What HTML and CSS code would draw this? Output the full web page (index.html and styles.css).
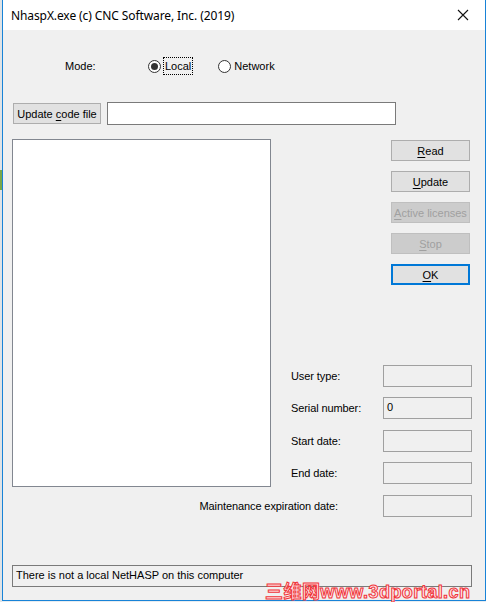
FILE: index.html
```html
<!DOCTYPE html>
<html lang="en">

<head>
    <meta charset="UTF-8">
    <meta name="viewport" content="width=device-width, initial-scale=1.0">
    <title>NhaspX</title>
    <link rel="stylesheet" href="styles.css">
</head>

<body>
    <div class="desk"></div>

    <div class="window">
        <div class="titlebar">
            <span class="title">NhaspX.exe (c) CNC Software, Inc. (2019)</span>
            <span class="close">
                <svg width="12" height="12" viewBox="0 0 12 12">
                    <path d="M1 1 L11 11 M11 1 L1 11" stroke="#111" stroke-width="1.1" fill="none"/>
                </svg>
            </span>
        </div>

        <div class="dialog">
            <div class="mode-row">
                <span class="mode-label">Mode:</span>
                <label class="radio checked"><span class="dot"></span><span class="focus">Local</span></label>
                <label class="radio"><span class="dot"></span><span>Network</span></label>
            </div>

            <div class="code-row">
                <button class="btn code-btn">Update <u>c</u>ode file</button>
                <div class="edit code-edit"></div>
            </div>

            <div class="main">
                <div class="listbox"></div>

                <div class="side">
                    <div class="buttons">
                        <button class="btn"><u>R</u>ead</button>
                        <button class="btn"><u>U</u>pdate</button>
                        <button class="btn disabled"><u>A</u>ctive licenses</button>
                        <button class="btn disabled"><u>S</u>top</button>
                        <button class="btn default"><u>O</u>K</button>
                    </div>

                    <div class="fields">
                        <div class="field"><span class="lbl">User type:</span><div class="edit ro"></div></div>
                        <div class="field f2"><span class="lbl">Serial number:</span><div class="edit ro">0</div></div>
                        <div class="field f3"><span class="lbl">Start date:</span><div class="edit ro"></div></div>
                        <div class="field f4"><span class="lbl">End date:</span><div class="edit ro"></div></div>
                    </div>
                </div>

                <div class="field maint">
                    <span class="lbl">Maintenance expiration date:</span>
                    <div class="edit ro"></div>
                </div>
            </div>

            <div class="status">
                There is not a local NetHASP on this computer
                <span class="mark">三维网www.3dportal.cn</span>
            </div>
        </div>
    </div>
</body>

</html>
```

FILE: styles.css
```css
:root {
    --face: #f0f0f0;
    --btn: #e1e1e1;
    --btn-border: #adadad;
    --edge: #7a7a7a;
    --accent: #1883d7;
}

* {
    margin: 0;
    padding: 0;
    box-sizing: border-box;
}

body {
    display: flex;
    width: 486px;
    height: 602px;
    background-color: #e9ecef;
    font-family: 'Liberation Sans', Arial, sans-serif;
    font-size: 11px;
    color: #000;
    overflow: hidden;
}

.desk {
    width: 2px;
    background: linear-gradient(#dfe3e6 0 170px, #7aa84a 170px 190px, #dfe3e6 190px);
}

.window {
    width: 484px;
    height: 601px;
    border: 1px solid var(--accent);
    border-top: none;
    display: flex;
    flex-direction: column;
    background-color: var(--face);
}

.titlebar {
    height: 30px;
    background-color: #fff;
    display: flex;
    align-items: center;
    justify-content: space-between;
    padding-left: 8px;
}

.title {
    font-family: 'Noto Sans', 'Open Sans', sans-serif;
    font-size: 12px;
    letter-spacing: -0.1px;
    color: #000;
    margin-top: 1px;
}

.close {
    width: 46px;
    height: 30px;
    display: flex;
    align-items: center;
    justify-content: center;
    margin-right: -1px;
}

.dialog {
    flex: 1;
    padding: 27px 13px 0 9px;
    display: flex;
    flex-direction: column;
}

/* mode selector */

.mode-row {
    display: flex;
    align-items: center;
    height: 18px;
}

.mode-label {
    margin-left: 53px;
    width: 83px;
}

.radio {
    display: flex;
    align-items: center;
    margin-right: 26px;
}

.radio .dot {
    width: 13px;
    height: 13px;
    border: 1px solid #333;
    border-radius: 50%;
    background-color: #fff;
    margin-right: 3px;
    position: relative;
}

.radio.checked .dot::after {
    content: '';
    position: absolute;
    left: 2px;
    top: 2px;
    width: 7px;
    height: 7px;
    border-radius: 50%;
    background-color: #333;
}

.radio .focus {
    outline: 1px dotted #000;
    padding: 2px 1px 2px 1px;
}

/* code file row */

.code-row {
    display: flex;
    align-items: center;
    margin-top: 27px;
    height: 23px;
}

.btn {
    font-family: inherit;
    font-size: 11px;
    color: #000;
    background-color: var(--btn);
    border: 1px solid var(--btn-border);
    height: 21px;
    width: 79px;
    padding: 0;
}

.btn u {
    text-decoration-thickness: 1px;
    text-underline-offset: 2px;
}

.code-btn {
    width: 88px;
    margin-left: 1px;
}

.edit {
    height: 22px;
    border: 1px solid var(--edge);
    background-color: #fff;
    padding: 3px 4px;
}

.code-edit {
    width: 289px;
    height: 23px;
    margin-left: 6px;
}

/* list and side panel */

.main {
    display: grid;
    grid-template-columns: 259px 1fr;
    margin-top: 14px;
}

.listbox {
    height: 348px;
    border: 1px solid #828790;
    background-color: #fff;
}

.side {
    display: flex;
    flex-direction: column;
    align-items: flex-end;
    padding-top: 1px;
}

.buttons {
    display: flex;
    flex-direction: column;
    gap: 10px;
    margin-right: 2px;
}

.btn.disabled {
    background-color: #cccccc;
    border-color: #bfbfbf;
    color: #a0a0a0;
}

.btn.default {
    border: 2px solid #0078d7;
}

.fields {
    margin-top: auto;
    margin-bottom: 3px;
}

.field {
    display: flex;
    align-items: center;
}

.field .lbl {
    width: 92px;
    letter-spacing: -0.1px;
}

.field .edit {
    width: 89px;
    background-color: var(--face);
    border-color: #a0a0a0;
    padding: 3px 3px;
}

.f2 {
    margin-top: 10px;
}

.f3 {
    margin-top: 11px;
}

.f4 {
    margin-top: 10px;
}

.maint {
    grid-column: 1 / 3;
    justify-content: flex-end;
    margin-top: 8px;
}

.maint .lbl {
    width: auto;
    margin-right: 45px;
}

/* status line */

.status {
    position: relative;
    margin-top: 48px;
    height: 22px;
    border: 1px solid var(--edge);
    padding: 3px 3px;
}

.mark {
    position: absolute;
    left: 252px;
    top: 11px;
    font-family: 'Liberation Sans', 'Noto Sans CJK SC', sans-serif;
    font-size: 18px;
    font-weight: bold;
    letter-spacing: 0.45px;
    color: #ffe6e6;
    -webkit-text-stroke: 1px #f0343a;
    white-space: nowrap;
}
```
